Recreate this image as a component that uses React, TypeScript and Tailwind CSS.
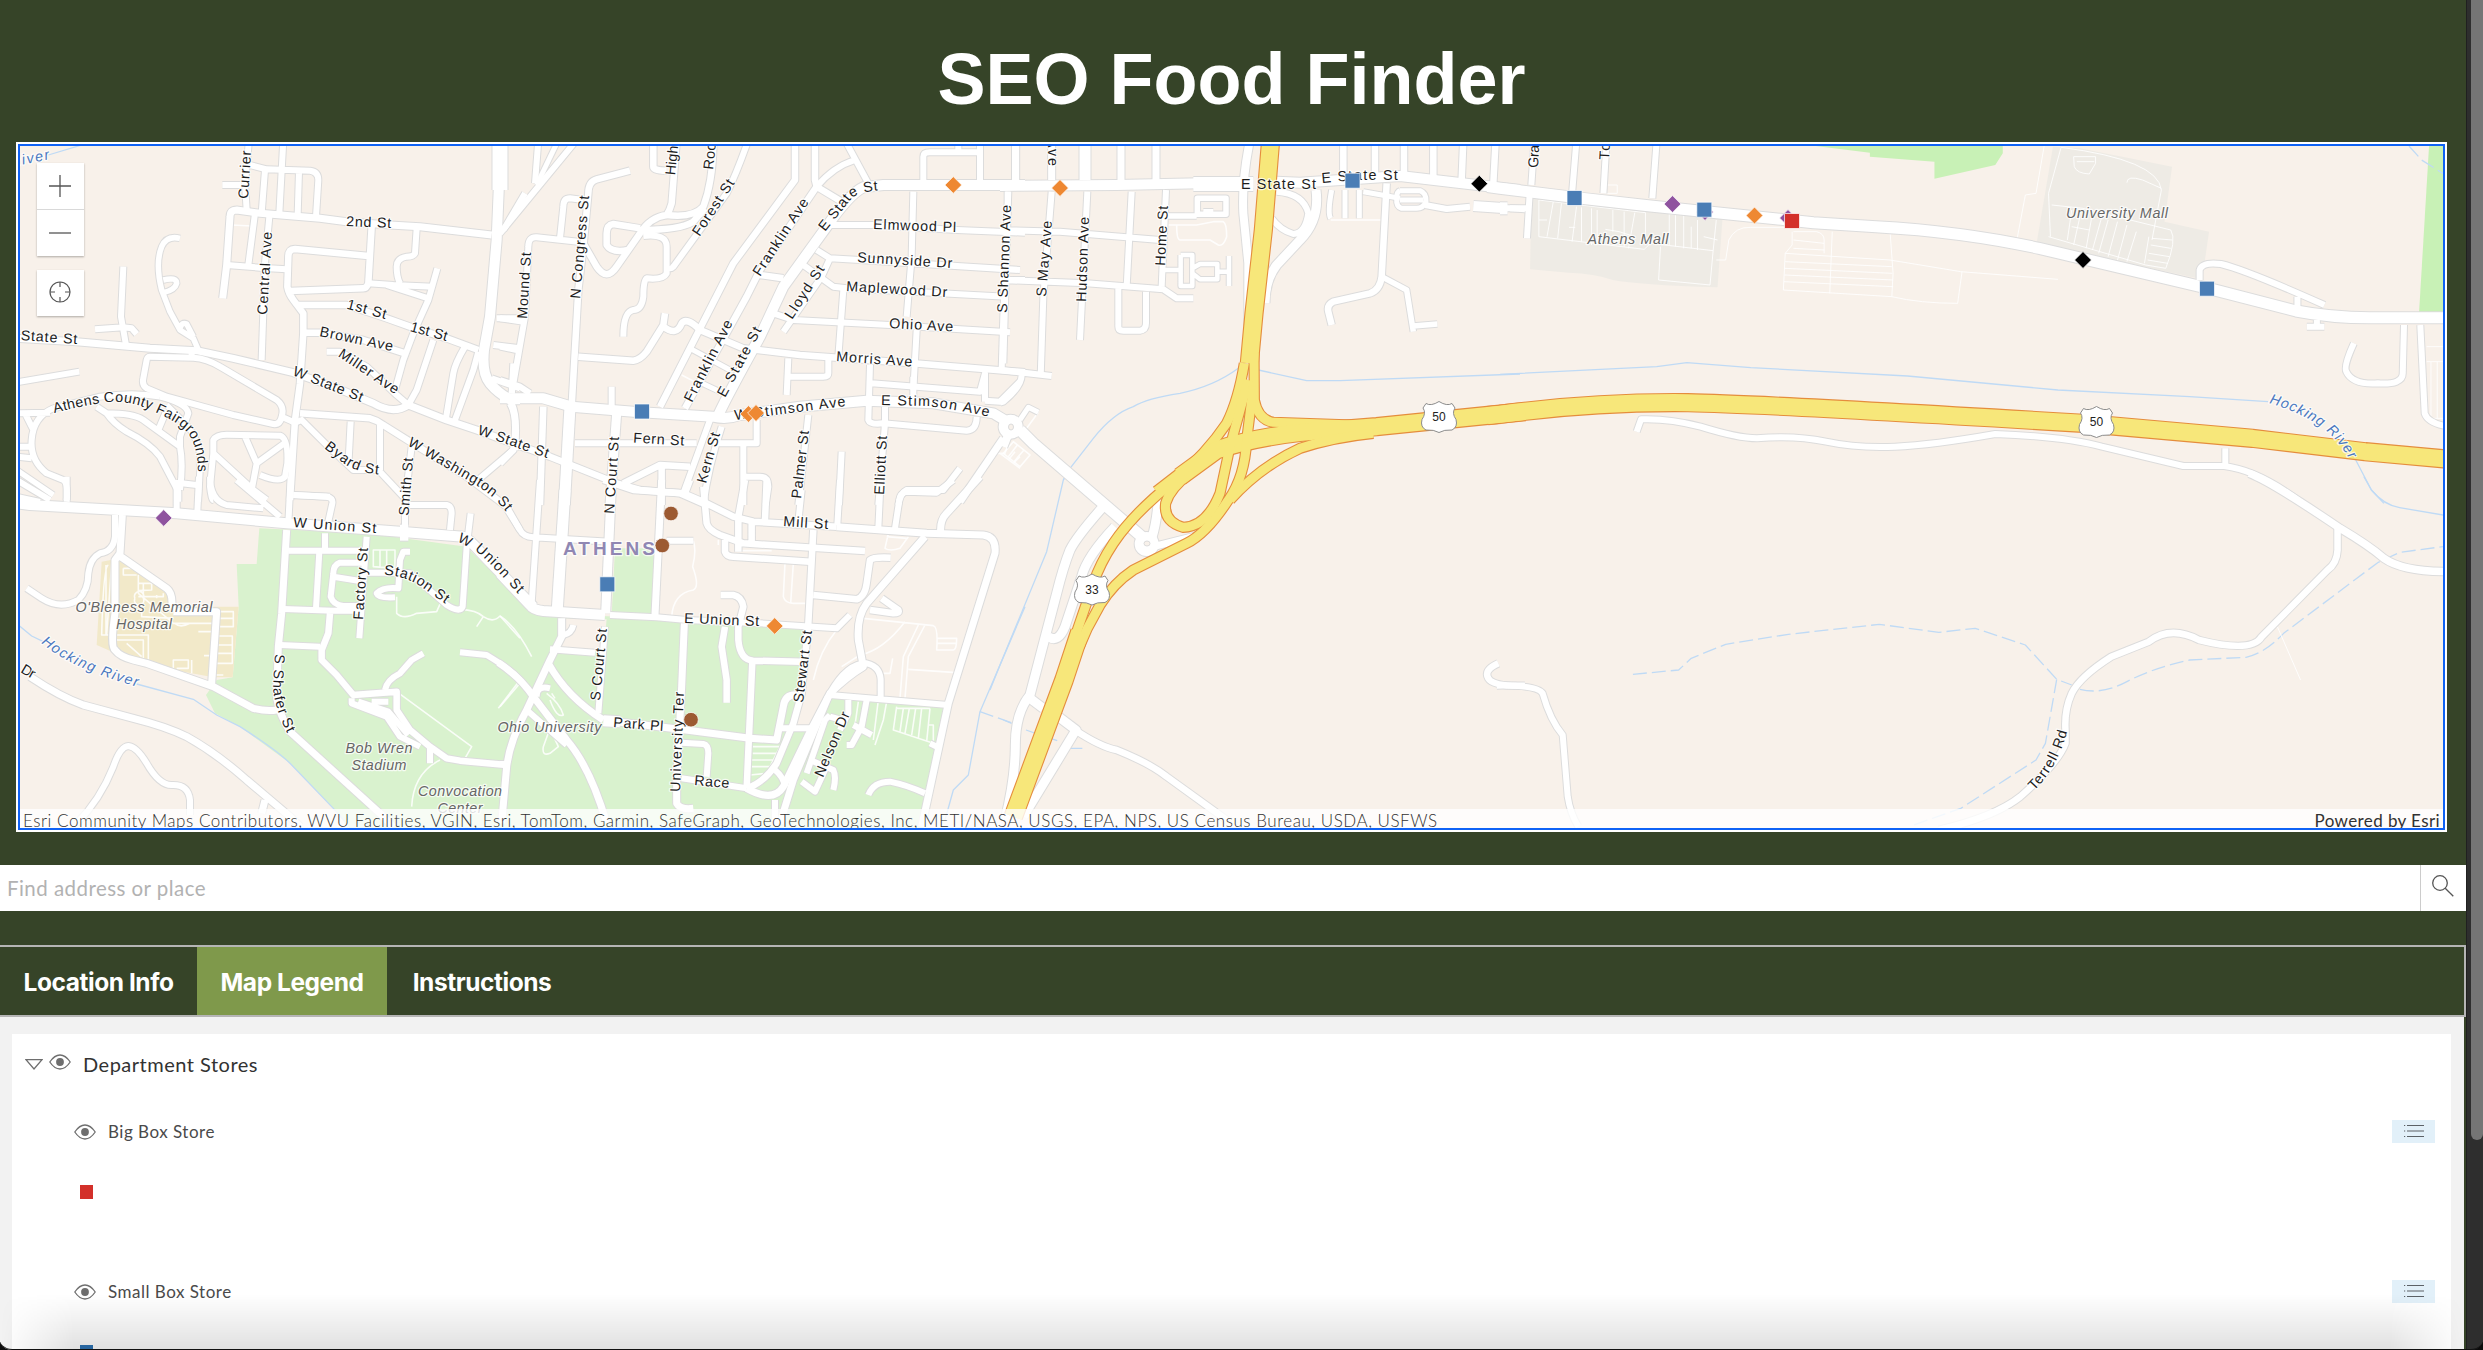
import React from "react";

/* ---------- Map data: each sheet keeps its lines in its own grid ---------- */

type Line = [width: number, d: string];
type Sheet = {
  at: string;
  roads: Line[];
  lots?: string;
  lotWidth?: number;
  water?: string;
  creeks?: string;
  highways?: Line[];
};

const SHEETS: Sheet[] = [
  {
    at: "translate(0 130) scale(0.33333)",
    roads: [
      [15, "M1500 20V180"],
      [10, "M1497 160L1490 330L1470 560L1452 660Q1445 730 1470 760T1530 808L1560 808"],
      [7, "M50 625L230 635L450 655L590 662L700 685L880 728L1000 770L1120 820Q1180 855 1225 825L1340 870L1430 900L1580 955"],
      [6, "M980 665H1020L1100 710L1190 795L1225 825L1250 780L1300 630"],
      [6, "M1312 415L1285 510L1240 610L1210 690L1185 780"],
      [7, "M668 505L680 405L690 260Q690 240 710 240L780 250L960 265L1040 275L1170 285L1260 290L1475 315"],
      [6, "M745 405L765 250M795 120L785 250M850 30L838 250M897 125L893 255M750 105L800 118L930 122Q955 125 955 150L948 260"],
      [6, "M747 30L735 160L740 240M667 165H725M808 260L795 400L785 690M680 405L780 413L860 418"],
      [6.5, "M1115 290L1105 460Q1100 475 1090 475L870 483M1105 378L885 357Q865 357 865 380L862 470Q865 490 880 510L910 550V610L900 760L885 870L870 1110"],
      [6, "M1250 295L1245 370Q1240 380 1220 380Q1190 385 1190 410Q1190 440 1200 460M1105 460L1180 465L1300 470M1160 465L1285 505"],
      [6.5, "M895 525H1040L1160 565L1230 590L1340 625L1435 660M915 608H960L1090 630L1215 670"],
      [6, "M1395 650Q1365 700 1360 730L1338 865M1435 665L1420 720L1365 870M1490 565H1560M1480 645L1560 655M1475 745L1560 775M1540 700L1535 790"],
      [6, "M1575 190L1510 300M1540 960L1440 1045M1535 820Q1555 860 1545 960"],
      [5.5, "M540 325Q500 315 485 350Q465 400 485 480L510 545L540 600L580 625L595 660M490 450Q530 440 530 460Q525 480 490 488M540 595Q545 575 560 582L580 620"],
      [6, "M370 410L363 560L378 645M285 598L370 592L395 595L410 612M50 757L238 725M575 660V680"],
      [6, "M450 680L580 683Q620 685 660 710L830 810Q855 830 845 860Q840 885 820 882L700 855L500 800L440 775Q425 765 430 745L440 690Q442 680 450 680M845 860L885 878L905 870"],
      [6, "M160 835Q100 860 95 930Q90 990 140 1030L190 1050Q205 1060 200 1115M160 835L300 800Q400 785 480 800M50 850L150 848M75 850L100 900M50 950H95M50 980L95 985"],
      [6, "M290 830L320 850Q340 880 380 905Q450 940 480 980L535 1085V1115M320 850Q400 850 430 870L540 950Q550 1000 540 1080M500 840L475 900M480 800Q560 820 565 850L540 920V950M545 1060L590 1065"],
      [5.5, "M500 825L560 885Q607 940 600 1020L595 1115M50 1020L160 1095M50 1100L120 1115"],
      [6, "M640 970L640 930Q650 914 680 914L840 917Q865 925 862 1000L855 1040Q840 1060 780 1035M735 920L770 1000L755 1080M770 1000L860 935M640 970L760 1080L800 1110M640 970L630 1070Q635 1110 640 1110"],
      [6.5, "M900 850L1110 865Q1130 870 1150 885L1230 935L1400 1040L1520 1130"],
      [6, "M900 865L985 950L1060 1020H1135L1210 1100M1052 875L1045 1010M1140 885V1020M1235 950L1215 1115M880 1095L990 1100"],
    ],
    lots: "M695 285L755 288",
    water: "M145 75L245 45",
  },
  {
    at: "translate(500 130) scale(0.33333)",
    roads: [
      [10, "M0 805L130 805L215 830L400 845L640 860Q680 870 720 855L900 830L1100 812L1300 820L1480 850L1530 880"],
      [10, "M655 855Q680 800 780 620L850 470L980 290Q1050 190 1090 172L1150 165H1575"],
      [6, "M115 30L105 160M230 30L115 170L0 310"],
      [5, "M175 30L110 165"],
      [6.5, "M390 122L290 148Q265 155 265 190L250 350L235 480L215 830"],
      [11, "M210 830L193 1125"],
      [6, "M250 210L210 205Q190 205 190 230L180 325M235 335L110 322Q85 320 85 350L75 560L35 790M0 565L70 575M0 650L50 660M0 750L60 770L90 790"],
      [6.5, "M250 340L290 410Q320 455 350 410L420 310Q450 262 500 255Q510 240 515 220L530 30M460 30V110Q460 122 500 122"],
      [6.5, "M500 255Q580 265 610 230Q640 150 640 30M420 300Q540 300 580 275L615 235M420 295L340 282Q320 285 320 310V345Q335 370 385 360"],
      [6, "M430 318Q500 310 500 350V430Q490 450 440 445Q430 450 430 500Q425 540 400 540Q370 545 370 620"],
      [6, "M745 30Q710 130 680 190L520 410Q510 420 505 410"],
      [6.5, "M885 30V150L700 400L480 830M945 30V150L950 170L780 420L740 500L555 835M780 435L850 445M950 170L1020 212"],
      [6, "M950 170Q1000 110 1065 90M1040 40L1105 160"],
      [6.5, "M235 680L400 692Q420 690 440 665L490 585L495 550M490 590Q530 620 545 580Q560 560 600 600L730 655L900 675L1240 700L1575 727"],
      [5, "M570 655L690 720M600 757L660 785"],
      [6, "M990 285H1120L1370 300L1575 308M950 360L990 385L1080 390L1560 420M910 405L1000 470L1040 475L1520 500M990 385L965 440L850 605M820 550L880 570L1170 585L1530 607"],
      [6, "M1240 185L1235 380L1220 560M1250 600L1240 780M1525 185L1510 560L1505 720M1030 480L1015 680M1510 450H1575"],
      [6, "M865 685L860 795M985 685V730Q985 740 970 740H870M1110 705L1105 870Q1110 885 1150 880L1400 902Q1430 900 1430 860M1115 760L1440 785L1455 730V815M1455 812L1500 815L1560 755"],
      [6, "M1270 150V80Q1270 67 1290 67H1440M1440 30V150M1375 30V65M1545 30V150M335 770V830M1155 830V880M1240 740V830"],
      [9, "M350 850L330 1125"],
      [6, "M225 940L590 940M650 940L770 940V870M630 870L550 1090M665 890Q625 1010 610 1125M730 945V1125M735 1040H780Q805 1040 805 1070L797 1125"],
      [6, "M925 855L895 1125M1025 965L1017 1125M1155 880L1135 1125M1380 1015L1330 1080H1220Q1200 1090 1195 1125"],
      [7, "M1510 925L1380 1115"],
      [6.5, "M0 925L150 980L350 1060L420 1080L540 1090L620 1125M370 1060L480 1005L570 1010M485 1010V1125M130 830L120 1125M30 820Q55 860 40 960L0 1000"],
    ],
    lots: "M545 735L650 790M1500 970L1560 1015M1490 970H1515L1530 930M1525 990L1545 965M1540 1000L1560 980",
  },
  {
    at: "translate(1000 130) scale(0.33333)",
    roads: [
      [10, "M0 168L350 165L600 160H760M830 155L900 158L1200 138L1560 180"],
      [14, "M580 162H760"],
      [7, "M47 30V150M155 30V150M363 30V150M468 30V150"],
      [11, "M255 30V150"],
      [6, "M23 185V240L10 700M155 185L130 500L122 740M262 185L240 630M395 185L380 470M0 300L180 305L480 330M0 450L260 460L490 478L530 505H580"],
      [6, "M355 475V590Q355 602 370 602H420Q438 600 438 580V485M498 180L485 470M0 720L155 738M65 735Q65 770 10 815L0 818"],
      [5.5, "M500 258H590M590 253H678V205H592V250M640 245H610M1145 440L1220 480L1240 605M1240 588L1312 582"],
      [4.5, "M490 420H540M542 375H577V468H542V375M577 415L600 402H652V448H600L577 430M650 425H685M687 378V468"],
      [8, "M750 30Q725 150 730 250L745 400V600"],
      [9, "M948 180Q960 270 900 330L830 405Q795 450 795 520"],
      [6, "M830 185Q910 190 925 250Q915 312 880 312Q840 300 815 265"],
      [6.5, "M1030 30V130M1125 30V130M1212 30V130M1300 30V140M1390 30L1385 150M1487 30L1480 160"],
      [5, "M995 180Q982 250 992 265M1035 180V265M1078 180V265M1090 185L1200 205"],
      [6.5, "M1160 160L1145 440Q1140 480 1110 490L1000 515Q980 525 985 545L995 585"],
      [5, "M1200 182H1260Q1280 190 1278 215Q1270 235 1250 235H1205Q1188 230 1190 205Q1190 185 1200 182M1200 210H1270"],
      [6, "M1275 225L1340 237L1410 230M1530 235L1575 238"],
      [10, "M1420 228L1520 235"],
      [5, "M60 870L85 832L115 847"],
    ],
    lots: "M505 285L590 285L640 275H670Q680 280 680 320Q670 350 655 345L630 330H540Q530 330 530 285M992 270H1145M115 847L80 895M10 970L60 1010L90 975L40 935ZM25 980L52 945M42 995L72 960",
    water: "M715 715Q640 770 540 790Q440 805 400 830Q340 850 280 925L210 1015L190 1050M775 720L920 752H1020L1560 732",
  },
  {
    at: "translate(1500 130) scale(0.62691 0.33333)",
    lotWidth: 1,
    roads: [
      [11, "M-20 170L0 175L130 205L240 228L500 278L600 290Q740 305 860 355L1130 475L1270 543Q1330 565 1400 563H1520"],
      [6, "M55 30L50 165M47 200L43 325M122 30L115 190M170 30L165 190M250 30L243 205M0 235H45"],
      [12, "M0 235H12"],
      [6, "M218 905L225 868Q270 865 320 890Q380 925 410 925Q470 915 520 935T630 950T790 912Q900 920 960 950L1090 1008H1155Q1210 1020 1280 1120M1157 955V1010"],
      [6, "M1116 450V420Q1120 395 1150 402Q1190 420 1315 525M1272 500V540"],
      [6, "M1303 570V590M1287 590H1315M1362 640Q1345 710 1350 725Q1360 765 1400 760Q1440 765 1440 730L1442 585M1468 585L1475 850Q1480 880 1514 890"],
    ],
    lots: "M62 210V320L230 358L240 340M62 210L232 248V345M75 270H62M85 215L75 320M98 220L92 325M110 292H120M122 230L115 335M130 232V335M146 235V345M155 240V345M168 298L190 305L215 320M180 240V305M198 245V350M215 248L205 355M270 250V345M280 255V350M293 255V355M305 290V355M315 270V360M325 320L347 330M270 252L293 255M240 340L340 362L345 270M256 350L253 450L335 465L340 362M345 390H360L365 330Q375 290 400 292H455M468 305H505Q517 310 517 330V370M466 305V345L455 370L452 480L625 500L627 430L622 300M468 330L517 340M468 355L517 360M455 370L622 390L735 425L890 448M455 395L625 410M454 415L626 430M454 435L627 450M453 455L627 470M526 490L530 305M625 500Q670 520 730 520L737 425M895 52Q1050 90 1055 180L1040 330M895 52L875 190L878 320M880 225L930 235L1070 300Q1080 330 1062 415L1030 405M875 320L1030 405M915 80H950V100L940 132Q920 130 916 110ZM920 95H948M1000 158Q1000 135 1025 150L1055 175M912 240L905 330M925 260L915 345M940 300L912 290M945 250L935 355M960 260L945 360M970 270L955 370M985 275L970 380M1000 285L985 390M1015 305L1000 395M1035 320L1028 400M1040 325L1072 330M1038 345L1070 355M1035 370L1068 380M1033 390L1065 400M868 48L855 190L838 195L825 325M1478 650H1504M1478 695H1504M1485 695V865M1495 695V865M1478 865H1504M170 165H187V190H170",
    water: "M0 733L250 710L298 698L400 713L650 738L890 780L1100 800L1225 815M1365 990L1390 1080L1410 1120",
    creeks: "M1450 48L1470 90L1504 130",
    highways: [[17, "M-20 857L0 853Q150 815 300 818Q420 822 930 880L1200 925L1380 965L1520 989"]],
  },
  {
    at: "translate(0 480) scale(0.33333)",
    roads: [
      [10, "M40 68L90 75L530 100L860 130L1200 155L1390 170Q1410 180 1440 215L1600 380"],
      [16, "M1200 158H1225"],
      [6, "M200 -10V60M50 0L150 60M530 0V90M597 -10L592 95M630 -10Q630 60 680 75L790 85M710 0L840 110M872 -10L865 130M880 45L980 50Q1000 53 997 70L985 125M1230 75H1340Q1355 78 1355 100L1350 150M1215 20V150"],
      [6, "M1520 80L1560 150M1412 100L1400 200L1388 380Q1380 400 1340 375L1230 280L1190 278H1100"],
      [6, "M345 105V170Q340 215 300 220Q270 235 265 280Q265 330 235 360Q180 390 125 355L80 325"],
      [7, "M367 105L360 220L345 240V400Q330 500 345 510Q360 530 400 540L440 550L640 620L760 685Q800 695 830 690M355 225L500 325Q520 340 515 385M520 395H650L635 610"],
      [7, "M90 590Q180 650 250 675L400 715Q500 740 560 770Q650 820 740 900L870 1010L900 1040M795 960L785 1000"],
      [6, "M230 1030Q300 960 340 860Q360 800 385 798Q410 800 440 850Q480 920 520 915Q565 915 570 960V1005"],
      [7, "M860 150L845 400L835 500L830 640Q830 690 870 755L1140 1000L1180 1040"],
      [6, "M865 212H1090M975 160V210M958 215L948 385M850 387L1000 392H1080M1100 170L1078 475M1090 248H1020Q1000 255 1000 280L992 350Q1000 375 1030 378H1075M1000 290L1080 303M840 495L960 500"],
      [6.5, "M990 400L985 460L965 510V540L1010 585L1060 645L1190 635V690L1230 750L1290 800L1340 835L1380 842L1520 855"],
      [6, "M1055 655V670L1160 710L1200 770L1260 800M1075 665L1165 695L1225 765M1155 630Q1160 600 1200 580L1235 540L1270 520M1380 517L1460 525Q1520 560 1560 600M1290 800V850M1115 665H1165"],
      [6, "M1230 215H1210L1200 240L1195 325Q1150 320 1130 340Q1135 355 1185 352"],
    ],
    lots: "M1190 635L1415 800L1395 835M1190 350V400Q1210 420 1250 400L1310 395L1330 350M1380 388Q1430 390 1450 410Q1480 430 1500 408L1560 475M1450 410L1430 440M1320 840Q1240 880 1235 980M1560 600L1495 685M1120 210H1185V265L1120 260ZM1140 210V260M1160 210V262M325 255Q310 260 305 465H445V540M318 255V465M335 250L320 465M350 480H430V535M380 490L425 530M370 265H410M370 265V285H410M415 285V340L520 430H650M415 310H455V330L415 332M415 350H490V340M430 350V310M470 345V355M405 355A14 14 0 1 0 430 355A14 14 0 1 0 405 355M425 370V410L520 415M520 405H650M525 430Q540 445 570 430M650 395H700V440H650M650 415H700M595 455H635M650 468H697V550H645M650 495H697M645 520H695M612 527H635M640 585H670M520 565V540H565V565H530M575 540V580",
    water: "M55 435L95 468L130 485M410 612L580 658L650 705L720 740Q830 810 870 850L1000 985L1040 1030",
  },
  {
    at: "translate(500 480) scale(0.33333)",
    roads: [
      [11, "M195 30L172 385"],
      [10, "M0 280L90 375Q100 390 130 393L315 405"],
      [9, "M335 0L317 400"],
      [6, "M120 0L95 370M330 405L470 412L560 420L780 430L1010 445L1050 405M20 85L60 150Q70 170 100 172L330 185M500 182H580"],
      [7, "M485 0L465 405"],
      [7, "M1010 140L1280 160L1450 165Q1490 170 1485 220L1345 670L1265 1040"],
      [6.5, "M310 0L400 30L550 40L620 70L700 110L760 125L1010 140M735 0L715 110V215M570 0L555 40M610 20L620 130Q625 150 660 165L730 190L1095 213M675 180V215Q680 230 700 230L930 245M755 130V190M800 0L795 120"],
      [6, "M905 30L895 125M1020 0L1012 135M1140 40L1135 145M1360 0L1310 38L1220 35Q1200 40 1198 60L1185 145"],
      [7, "M1440 -10L1340 100Q1320 120 1322 155M1275 170L1100 370Q1070 410 1075 480L1090 560Q1040 590 990 640L935 745L850 920Q820 970 740 925"],
      [6.5, "M940 150L925 430L905 640L880 730L830 850Q790 910 740 925M940 345L1070 358Q1095 350 1100 310L1110 240Q1120 230 1172 233M1145 355L1195 390Q1200 400 1180 400L1110 390"],
      [6, "M990 645L1345 675M990 640Q1040 550 1100 550Q1145 560 1142 610V650"],
      [7, "M985 650L880 900L840 1030"],
      [6.5, "M662 345H700Q725 350 730 380L715 440V480Q720 540 760 542L905 545M757 545L740 925M675 440L665 500L680 600V668"],
      [7, "M553 430L545 620L530 900V970Q540 990 580 985"],
      [11, "M310 722L360 725"],
      [7, "M350 725L540 748L750 775L830 780L850 680Q855 640 895 645"],
      [6, "M840 745H935M545 788L610 792Q625 795 625 820L620 890M545 895L740 925M825 870Q850 890 855 920M825 960V1035"],
      [6, "M315 440L295 700M220 435Q215 460 190 465M150 508L285 518"],
      [7, "M145 550Q200 650 310 720M185 415V470L150 540L80 690Q30 780 20 860L5 1030M-5 548Q60 590 100 650L200 780Q270 860 320 1030"],
      [6, "M110 650Q110 615 150 625M80 690L200 795M0 852H20"],
      [6, "M1045 660V700L1020 750M990 705L975 720L920 880M930 840L1000 870Q1010 890 1000 930M905 905L945 935L975 870M990 710L1025 720"],
      [6, "M1100 660L1085 740L1055 795H1040M1060 735L1115 765M1105 945Q1120 905 1170 905Q1220 915 1275 940M1290 790L1310 800"],
    ],
    lots: "M580 182Q590 210 578 260Q600 320 580 330Q520 340 515 410M855 250L850 350Q855 370 880 370H920M880 250L872 370M720 200H860M720 212H815M655 180V195M1165 160L1155 205Q1170 215 1200 205L1225 170M1160 170L1222 175M1090 415L1300 437Q1315 440 1310 510H1360Q1370 510 1370 475H1310M1310 490H1370M1215 425Q1150 510 1080 525L1025 560M1010 450Q960 510 940 600M1255 435L1210 530L1200 655M1275 435L1225 530L1215 655M1225 568L1370 578M1178 535L1170 580H1150M1135 660L1120 780M1160 665L1150 720L1125 795M1075 665L1065 735M1190 680L1180 750L1300 790V735H1285L1290 685M1210 685L1200 755M1228 685L1215 760M1247 685L1235 765M1265 685L1255 775M1285 735L1280 785M1190 685H1290M758 800H840L800 880L750 885M758 820H830M755 840H825M755 860H815M0 408Q50 440 95 530M0 680L60 610M140 640Q180 670 190 705Q170 715 150 660M155 640L165 655M150 745L130 800Q125 830 150 820L175 800Z",
    water: "M1575 380L1440 695L1405 885L1360 930L1335 1020",
    creeks: "M1440 695L1540 730",
  },
  {
    at: "translate(1000 380) scale(0.33333)",
    roads: [
      [11, "M60 150L100 190L425 470"],
      [24, "M32 140h0.1"],
      [8, "M10 200L30 150"],
      [9, "M305 385Q230 470 210 510Q190 560 170 640L90 945Q45 1000 46 1100Q45 1200 15 1320"],
      [9, "M345 440Q260 530 245 590L195 740Q175 790 145 770"],
      [9, "M90 955L130 985M175 1010L228 1050L70 1310"],
      [6.5, "M225 1050Q300 1100 350 1110Q450 1150 500 1190L680 1320M1495 850Q1450 870 1465 895Q1480 920 1575 917"],
      [24, "M440 492h0.1"],
      [9, "M455 475Q470 430 476 350"],
      [7, "M460 500L600 465"],
    ],
    water: "M210 265L190 300L140 515L0 855L-30 930",
    creeks: "M10 1020L35 1030M78 1050L180 1085M205 1105H262",
    highways: [
      [17, "M812 -720L790 -450L762 -200L748 -50"],
      [9, "M733 -50Q715 60 680 130Q620 220 520 305Q400 400 340 490Q300 550 280 610L232 750L222 790"],
      [9, "M762 -80L763 60Q775 120 820 127L1060 135"],
      [17, "M1575 95L1130 140L1000 150Q800 160 650 210L540 290"],
      [9, "M745 0L690 200L660 340Q620 440 550 442Q490 425 497 370Q510 325 570 280"],
      [9, "M760 20L740 180Q735 290 685 360Q620 460 560 490L400 570Q340 610 300 675L262 745L238 800"],
      [9, "M1120 160Q1000 172 900 205Q780 260 690 360"],
      [10, "M560 265L470 335"],
      [17.5, "M240 755L192 900L40 1310"],
    ],
  },
  {
    at: "translate(1500 480) scale(0.62691 0.33333)",
    lotWidth: 1,
    roads: [
      [7.5, "M1195 -20Q1230 5 1340 145Q1385 195 1410 235Q1440 275 1514 275"],
      [6.5, "M1336 145V210Q1335 250 1320 270L1215 470Q1200 520 1115 480Q1070 435 1035 485L975 530Q925 590 912 640Q900 690 902 750V790Q890 850 830 950Q790 1010 700 1050"],
      [6, "M-5 617Q60 615 68 640Q80 720 100 765L108 950Q112 1000 125 1040"],
    ],
    lots: "M1240 440L1277 600",
    water: "M1378 -10L1390 30Q1410 75 1435 83L1514 108",
    creeks: "M212 583L285 570L305 535L360 493L460 463L605 433L700 457L758 445L838 495L888 598L912 615M888 598L870 790L855 840L735 985L660 1035M925 628Q960 645 1000 605T1100 540L1190 532Q1220 520 1250 460L1400 248L1435 217L1504 200",
  },
];

type Label = [text: string, x1: number, y1: number, x2: number, y2: number];

const STREET_LABELS: Label[] = [
  ["Currier", 248, 199, 251, 151],
  ["2nd St", 346, 226, 391, 228],
  ["Central Ave", 267, 315, 272, 232],
  ["1st St", 346, 308.5, 385, 319],
  ["1st St", 409.5, 331, 446, 341],
  ["Brown Ave", 319, 336, 392, 351],
  ["Miller Ave", 337.5, 356, 395, 394.5],
  ["W State St", 292, 375, 361, 402],
  ["State St", 20.5, 340, 77, 344],
  ["Smith St", 408.5, 516, 413, 458],
  ["W State St", 477, 434, 547, 458],
  ["Mound St", 527, 319, 531, 252.5],
  ["N Congress St", 580, 299, 589, 196],
  ["Forest St", 699.5, 237, 735, 183],
  ["High", 675, 175.5, 678, 146],
  ["Roo", 713, 170, 716, 143],
  ["Franklin Ave", 760, 277, 809, 202],
  ["Franklin Ave", 692, 403, 733, 323],
  ["E State St", 725, 398, 762, 330],
  ["Lloyd St", 792, 320, 825, 269],
  ["Elmwood Pl", 873, 229, 956, 232],
  ["Sunnyside Dr", 857, 262, 952, 268],
  ["Maplewood Dr", 846, 291, 947, 297],
  ["Ohio Ave", 889, 328, 953, 331.5],
  ["Morris Ave", 836, 361, 912, 366.5],
  ["S Shannon Ave", 1007, 313, 1011, 205],
  ["W Stimson Ave", 735, 420, 846, 406],
  ["Fern St", 633, 442.5, 684, 445.5],
  ["N Court St", 614, 514, 619, 437],
  ["Kern St", 706, 484, 720, 434],
  ["Palmer St", 801, 499, 809, 431],
  ["Elliott St", 884, 495, 887, 436],
  ["Ave", 1048, 138, 1048, 166],
  ["S May Ave", 1046, 297, 1052, 221],
  ["Hudson Ave", 1086, 302, 1089, 217],
  ["Home St", 1165, 266, 1168, 206],
  ["E State St", 1241, 189, 1316, 189],
  ["Gra", 1538, 168, 1539, 145],
  ["To", 1609, 160, 1610, 143],
  ["W Union St", 293, 527, 376, 533],
  ["Factory St", 363, 620, 368, 548],
  ["Dr", 20, 672, 32, 679],
  ["Mill St", 783, 526, 828, 529],
  ["E Union St", 684, 623, 759, 626],
  ["S Court St", 600, 701, 607, 629],
  ["Park Pl", 613, 727, 663, 731],
  ["University Ter", 680, 792, 684, 692],
  ["Race", 694, 785, 729, 788],
  ["Stewart St", 803, 703, 812, 631],
  ["Nelson Dr", 823, 778, 850, 714],
];

const CURVED_LABELS: { text: string; d: string; river?: boolean; len: number }[] = [
  { text: "Athens County Fairgrounds", d: "M54 413Q90 404 110 402Q135 401 157 413Q182 424 190 436Q199 450 198 480", len: 184 },
  { text: "Byard St", d: "M324 448L346 465Q360 474 388 475", len: 62 },
  { text: "W Washington St", d: "M407 445L467 480Q497 496 510 518", len: 120 },
  { text: "E State St", d: "M825 232L852 198Q862 190 890 190", len: 71 },
  { text: "E Stimson Ave", d: "M881 405L927 406Q960 410 1000 419", len: 109 },
  { text: "E State St", d: "M1322 183L1353 180H1410", len: 76 },
  { text: "W Union St", d: "M457 541L476 551Q494 566 526 603", len: 82 },
  { text: "Station St", d: "M384 575Q400 575 417 584L450 607", len: 69 },
  { text: "S Shafer St", d: "M275 654L273 688Q275 712 292 742", len: 82 },
  { text: "Terrell Rd", d: "M2034 791Q2060 765 2069 724", len: 69 },
  { text: "Hocking River", d: "M2269 403Q2300 412 2321 427Q2340 440 2353 466", river: true, len: 101 },
  { text: "Hocking River", d: "M41 643Q62 660 90 671T142 688", river: true, len: 106 },
];

const PLACES: [text: string, x: number, y: number, len: number][] = [
  ["O'Bleness Memorial", 144, 612, 137],
  ["Hospital", 144, 629, 56],
  ["Bob Wren", 379, 753, 67],
  ["Stadium", 379, 770, 55],
  ["Convocation", 460, 796, 84],
  ["Center", 460, 813, 45],
  ["Ohio University", 549.5, 732, 104],
  ["Athens Mall", 1628, 244, 81],
  ["University Mall", 2117, 218, 102],
];

const RIVER_END: Label = ["River", 11, 167, 50, 159];

type Pin = ["square" | "diamond" | "circle", string, number, number];

const PINS: Pin[] = [
  ["square", "#4a7db5", 642, 411.5],
  ["diamond", "#ee8832", 748.5, 414],
  ["diamond", "#ee8832", 756, 413],
  ["diamond", "#ee8832", 953.3, 185],
  ["diamond", "#ee8832", 1060, 188],
  ["square", "#4a7db5", 1352.5, 180.7],
  ["diamond", "#000000", 1479.3, 183.7],
  ["square", "#4a7db5", 1574.5, 198],
  ["diamond", "#8f539f", 1672.5, 204],
  ["diamond", "#8f539f", 1705, 212],
  ["square", "#4a7db5", 1704.3, 209.7],
  ["diamond", "#ee8832", 1754.5, 215.5],
  ["diamond", "#8f539f", 1788, 218],
  ["square", "#d3302a", 1792, 221],
  ["diamond", "#000000", 2083, 260],
  ["square", "#4a7db5", 2207, 288.7],
  ["diamond", "#8f539f", 163.7, 518],
  ["circle", "#9c5a32", 671, 513.5],
  ["circle", "#9c5a32", 662.3, 545.5],
  ["circle", "#9c5a32", 691, 719.7],
  ["square", "#4a7db5", 607.3, 584.3],
  ["diamond", "#ee8832", 774.7, 626],
];

const SHIELDS: [string, number, number][] = [
  ["50", 1439, 417],
  ["50", 2096.5, 422],
  ["33", 1092, 589.5],
];

function StraightLabel({ label }: { label: Label }) {
  const [text, x1, y1, x2, y2] = label;
  const angle = (Math.atan2(y2 - y1, x2 - x1) * 180) / Math.PI;
  return (
    <text transform={`translate(${x1} ${y1}) rotate(${angle})`} textLength={Math.hypot(x2 - x1, y2 - y1)}>
      {text}
    </text>
  );
}

function MarkerPin({ pin: [shape, color, x, y] }: { pin: Pin }) {
  if (shape === "circle") return <circle cx={x} cy={y} r="7.3" fill={color} stroke="#fff" strokeOpacity="0.7" />;
  if (shape === "square")
    return <rect x={x - 7.5} y={y - 7.5} width="15" height="15" fill={color} stroke="#fff" strokeOpacity="0.7" />;
  return (
    <path d={`M${x} ${y - 8.4}l8.4 8.4l-8.4 8.4l-8.4 -8.4z`} fill={color} stroke="#fff" strokeOpacity="0.7" />
  );
}

function Lines({ pick, extra, color }: { pick: "roads" | "highways"; extra: number; color: string }) {
  return (
    <>
      {SHEETS.map((s, i) => (
        <g key={i} transform={s.at} stroke={color}>
          {(s[pick] ?? []).map(([w, d], j) => (
            <path
              key={j}
              d={d}
              strokeWidth={w + extra}
              vectorEffect="non-scaling-stroke"
              strokeLinecap={w > 20 ? "round" : "butt"}
            />
          ))}
        </g>
      ))}
    </>
  );
}

function StreetMap() {
  return (
    <svg viewBox="20 146 2423 682" className="block size-full" preserveAspectRatio="none" fill="none" strokeLinejoin="round">
      <rect x="20" y="146" width="2423" height="682" fill="#f8f1ea" />
      <g transform="translate(0 480) scale(0.33333)">
        <path
          fill="#d9f2ce"
          d="M778 145L1100 160L1400 200L1600 400L1970 415L2430 440L2415 600L2380 745L2435 745L2480 655L2845 680L2770 1060L1060 1060L1000 985L870 850L720 740L645 700L618 645L650 600L698 592L716 380L710 252L770 252Z"
        />
        <path fill="#f8f1ea" d="M1690 415L1820 418L1810 515L1655 510L1690 460Z" />
        <path fill="#d9f2ce" d="M1845 205H1965V405H1835Z" />
        <path fill="#f2e9c9" d="M305 245L360 235L525 345L522 380H716L698 592H640L440 555L380 535L290 495Z" />
      </g>
      <g transform="translate(1500 130) scale(0.62691 0.33333)">
        <path fill="#eeebe5" d="M50 205L355 262L347 472Q220 465 180 450Q150 430 110 428L48 418Z" />
        <path fill="#eeebe5" d="M882 50L925 55L1072 110L1060 275L1131 305L1120 448L856 340Z" />
        <path fill="#c8f1b6" d="M495 46L590 68V80L693 95V146L790 105L802 70V46Z" />
        <path fill="#c8f1b6" d="M1482 46H1506V548H1466Z" />
      </g>
      {SHEETS.map((s, i) => (
        <g key={i} transform={s.at} stroke="#bfdaf5" strokeWidth="1.3">
          <path d={s.water ?? ""} vectorEffect="non-scaling-stroke" />
          <path d={s.creeks ?? ""} vectorEffect="non-scaling-stroke" strokeDasharray="14 5" />
        </g>
      ))}
      {SHEETS.map((s, i) => (
        <g key={i} transform={s.at} stroke="#ffffff" strokeOpacity="0.85" strokeWidth={s.lotWidth ?? 1.6}>
          <path d={s.lots ?? ""} vectorEffect="non-scaling-stroke" />
        </g>
      ))}
      <Lines pick="roads" extra={2} color="#dcdcdc" />
      <Lines pick="roads" extra={0} color="#ffffff" />
      <ellipse cx="1011" cy="427" rx="2.5" ry="3" fill="#f8f1ea" stroke="#dcdcdc" />
      <ellipse cx="1147" cy="543.5" rx="3" ry="2.5" fill="#f8f1ea" stroke="#dcdcdc" />
      <Lines pick="highways" extra={2.2} color="#e58d3d" />
      <Lines pick="highways" extra={0} color="#f7e77a" />

      <g
        className="[font-family:'Liberation_Sans',sans-serif]"
        fontSize="14.3"
        fill="#1d1d1d"
        stroke="#ffffff"
        strokeOpacity="0.75"
        strokeWidth="2.5"
        paintOrder="stroke"
      >
        {STREET_LABELS.map((l, i) => (
          <StraightLabel key={i} label={l} />
        ))}
        {CURVED_LABELS.map((l, i) => (
          <g key={i} fill={l.river ? "#4a78c0" : "#1d1d1d"} fontStyle={l.river ? "italic" : "normal"}>
            <path id={`label-${i}`} d={l.d} fill="none" stroke="none" />
            <text textLength={l.len}>
              <textPath href={`#label-${i}`} textLength={l.len}>
                {l.text}
              </textPath>
            </text>
          </g>
        ))}
        <g fill="#4a78c0" fontStyle="italic">
          <StraightLabel label={RIVER_END} />
        </g>
        <g fill="#666666" fontStyle="italic" textAnchor="middle">
          {PLACES.map(([t, x, y, len]) => (
            <text key={t} x={x} y={y} textLength={len}>
              {t}
            </text>
          ))}
        </g>
        <text x="563" y="555.3" textLength="92" fontSize="19" fontWeight="bold" fill="#9087b3">
          ATHENS
        </text>
      </g>

      {SHIELDS.map(([n, x, y], i) => (
        <g key={i} transform={`translate(${x} ${y})`}>
          <path
            d="M-13 -13.5Q-8 -10.5 0 -15.5Q8 -10.5 13 -13.5L16 -9Q12.500 -4 17 2.500Q19 10 13 13Q5 12.500 0 15.500Q-5 12.500 -13 13Q-19 10 -17 2.500Q-12.500 -4 -16 -9Z"
            fill="#fff"
            stroke="#8c8c8c"
          />
          <text y="4" textAnchor="middle" fontSize="12" fill="#222" className="[font-family:'Liberation_Sans',sans-serif]">
            {n}
          </text>
        </g>
      ))}
      {PINS.map((p, i) => (
        <MarkerPin key={i} pin={p} />
      ))}
    </svg>
  );
}

/* ---------- Small icons ---------- */

function EyeIcon() {
  return (
    <svg viewBox="0 0 22 16" className="h-4 w-[22px] shrink-0" fill="none" stroke="#6e6e6e" strokeWidth="1.300">
      <path d="M0.800 8Q5.500 1 11 1T21.200 8Q16.500 15 11 15T0.800 8Z" />
      <circle cx="11" cy="8" r="3.900" fill="#6e6e6e" stroke="none" />
    </svg>
  );
}

function ListButton() {
  return (
    <button className="flex h-[23px] w-[43px] items-center justify-center bg-[#e2f0f9]">
      <svg viewBox="0 0 20 14" className="-mt-px h-[14px] w-5" stroke="#5c6166" strokeWidth="1.100">
        <path d="M0 1.500H1.200M3 1.500H20M0 7H1.200M3 7H20M0 12.500H1.200M3 12.500H20" />
      </svg>
    </button>
  );
}

function LayerItem({ name, swatch }: { name: string; swatch: string }) {
  return (
    <li className="h-40">
      <div className="flex h-[23px] items-center justify-between pr-4 pl-[62px]">
        <div className="flex items-center">
          <EyeIcon />
          <span className="ml-3 text-[17px] leading-none tracking-[0.500px] text-[#4a4a4a]">{name}</span>
        </div>
        <ListButton />
      </div>
      <div className="mt-[42px] ml-[67.500px] size-[13.500px]" style={{ backgroundColor: swatch }} />
    </li>
  );
}

const mapButton = "flex h-[46px] w-[47px] items-center justify-center bg-white";

function MapControls() {
  return (
    <div className="absolute top-[17px] left-[17px] flex flex-col gap-[14px]">
      <div className="flex flex-col gap-px bg-[#d9d9d9] shadow-[0_1px_2px_rgba(0,0,0,0.3)]">
        <button className={mapButton}>
          <svg viewBox="0 0 22 22" className="-ml-0.5 size-[22px]" stroke="#555" strokeWidth="1.300">
            <path d="M11 0V22M0 11H22" />
          </svg>
        </button>
        <button className={mapButton}>
          <svg viewBox="0 0 22 22" className="-ml-0.5 size-[22px]" stroke="#555" strokeWidth="1.300">
            <path d="M0 11H22" />
          </svg>
        </button>
      </div>
      <button className="flex h-[46px] w-[47px] items-center justify-center bg-white shadow-[0_1px_2px_rgba(0,0,0,0.3)]">
        <svg viewBox="0 0 22 22" className="-mt-0.5 -ml-0.5 size-[22px]" fill="none" stroke="#555" strokeWidth="1.200">
          <circle cx="11" cy="11" r="10" />
          <path d="M11 1V6M11 16V21M1 11H6M16 11H21" />
        </svg>
      </button>
    </div>
  );
}

export default function App() {
  return (
    <div className="relative flex h-[1350px] w-[2483px] overflow-hidden bg-[#364428] [font-family:Lato,sans-serif]">
      <main className="flex w-[2466px] flex-col">
        <h1 className="flex h-[142px] shrink-0 items-center justify-center pt-[15px] pr-[3px] text-[72px] font-bold text-white [font-family:'Liberation_Sans',sans-serif]">
          SEO Food Finder
        </h1>

        <section className="ml-4 h-[690px] w-[2431px] shrink-0 border-2 border-white">
          <div className="relative h-full border-2 border-[#0f62f5]">
            <StreetMap />
            <MapControls />
            <div className="absolute inset-x-0 bottom-0 flex h-[19px] justify-between overflow-hidden bg-white/80 pr-[3px] pl-[3px] text-[17px] leading-[24px] font-light whitespace-nowrap text-[#323232]">
              <span className="tracking-[0.540px]">
                Esri Community Maps Contributors, WVU Facilities, VGIN, Esri, TomTom, Garmin, SafeGraph, GeoTechnologies,
                Inc, METI/NASA, USGS, EPA, NPS, US Census Bureau, USDA, USFWS
              </span>
              <span className="font-normal tracking-[0.400px]">Powered by Esri</span>
            </div>
          </div>
        </section>

        <div className="mt-[33px] flex h-[46px] shrink-0 bg-white">
          <div className="flex flex-1 items-center border-r-[1.500px] border-[#ccc] pl-[7px] text-[20.500px] tracking-[0.450px] text-[#b2b2b2]">
            Find address or place
          </div>
          <button className="flex w-[45px] items-center justify-center pr-0.5 pb-1">
            <svg viewBox="0 0 22 22" className="size-[22px]" fill="none" stroke="#555" strokeWidth="1.300">
              <circle cx="8" cy="8" r="7.300" />
              <path d="M13.200 13.200L21.300 21.300" />
            </svg>
          </button>
        </div>

        <nav className="mt-[34px] flex h-[72px] shrink-0 border-y-2 border-r-2 border-[#b5b5b5] text-[24.500px] font-bold tracking-[-0.450px] text-white [font-family:Inter,sans-serif]">
          <button className="w-[197px] pt-[3px]">Location Info</button>
          <button className="w-[190px] bg-[#7f994b] pt-[3px]">Map Legend</button>
          <button className="w-[190px] pt-[3px]">Instructions</button>
        </nav>

        <section className="mr-0.5 h-[333px] shrink-0 bg-[#f2f2f2] pt-[17px] pr-[13px] pl-3">
          <div className="h-full bg-white">
            <div className="flex h-[60px] items-center pl-[13px]">
              <svg viewBox="0 0 18 11" className="mt-px h-[11px] w-[18px]" fill="none" stroke="#6e6e6e" strokeWidth="1.300">
                <path d="M1 0.700H17L9 10Z" />
              </svg>
              <span className="-mt-1 ml-[6px]">
                <EyeIcon />
              </span>
              <span className="ml-3 text-[20px] leading-none tracking-[0.500px] text-[#323232]">Department Stores</span>
            </div>
            <ul className="mt-[26px]">
              <LayerItem name="Big Box Store" swatch="#d3302a" />
              <LayerItem name="Small Box Store" swatch="#2f74b5" />
            </ul>
          </div>
        </section>
      </main>

      <aside className="w-[17px] border-l-[1.500px] border-[#202020] bg-[#2e2e2e] pl-[3.500px]">
        <div className="h-[1140px] rounded-b-full bg-[#757575]" />
      </aside>

      <div className="pointer-events-none absolute bottom-0 left-0 h-[56px] w-[2464px] bg-linear-to-b from-transparent to-black/12 mask-x-from-97%" />
      <div className="pointer-events-none absolute -inset-x-px -top-3 bottom-0 rounded-b-[13px] border-b-[1.500px] border-[#111] shadow-[0_0_0_14px_#0c0c0c]" />
    </div>
  );
}
